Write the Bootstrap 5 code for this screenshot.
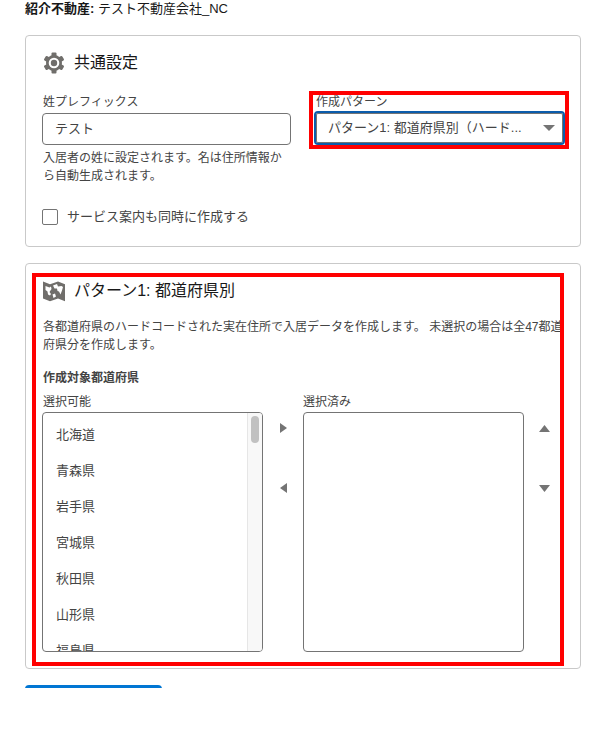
<!DOCTYPE html>
<html lang="ja">
<head>
<meta charset="utf-8">
<title>共通設定</title>
<link href="https://cdn.jsdelivr.net/npm/bootstrap@5.3.0/dist/css/bootstrap.min.css" rel="stylesheet">
<style>
html, body { height: 100%; overflow: hidden; background: #fff; }
body { font-family: "Liberation Sans", "Noto Sans CJK JP", sans-serif; font-size: 13px; color: #181818; }
.pg { height: 688px; overflow: hidden; padding: 1px 18px 0 25px; position: relative; }
.agency { line-height: 16px; margin-bottom: 18px; height: 16px; }
.panel { border: 1px solid #c9c9c9; border-radius: 4px; }
.panel-a { height: 212px; padding: 13px 17px 0; margin-bottom: 16px; }
.panel-b { height: 406px; padding: 13px 17px 0; overflow: hidden; margin-bottom: 16px; }
.head { height: 28px; font-size: 16px; gap: 8px; line-height: 28px; margin-left: -1px; }
.head svg { width: 24px; height: 24px; flex: none; }
.head-a { margin-bottom: 17px; }
.head-b { margin-bottom: 13px; }
.fld-label { font-size: 12px; line-height: 16px; color: #444; display: block; }
.two { display: grid; grid-template-columns: 248px 248px; gap: 25px; }
.txt { height: 32px; border: 1px solid #747474; border-radius: 4px; padding: 0 12px; line-height: 30px; margin: 3px 0 0 -1px; color: #444; }
.sel { height: 34px; border: 2px solid #0b5cab; border-radius: 4px; padding: 0 12px; line-height: 30px; margin: 1px -1px 0 -2px; position: relative; box-shadow: inset 0 0 0 1px #747474; color: #444; }
.sel i { position: absolute; right: 8px; top: 12px; width: 0; height: 0; border: 6px solid transparent; border-top: 6px solid #747474; border-bottom: 0; }
.hint { font-size: 12px; line-height: 18px; color: #444; margin-top: 4px; }
.chk { margin-top: 23px; gap: 9px; color: #444; line-height: 18px; }
.chk span { width: 16px; height: 16px; border: 1px solid #747474; border-radius: 2px; flex: none; margin-left: -1px; }
.desc { font-size: 12px; line-height: 18px; color: #444; width: 522px; }
.subh { font-size: 12px; font-weight: 700; line-height: 16px; color: #444; margin-top: 16px; margin-bottom: 8px; }
.dual { display: grid; grid-template-columns: 220px 40px 221px 40px; }
.lbox { height: 240px; border: 1px solid #747474; border-radius: 4px; overflow: hidden; margin-top: 2px; position: relative; }
.lbox-l { margin-left: -1px; }
.lbox ul { list-style: none; margin: 0; padding: 5px 0 0 13px; color: #444; }
.lbox li { height: 36px; line-height: 34px; }
.sbar { position: absolute; right: 0; top: 0; bottom: 0; width: 15px; background: #f8f8f8; border-left: 1px solid #e6e6e6; }
.sbar b { position: absolute; left: 3px; top: 3px; width: 8px; height: 27px; border-radius: 4px; background: #c1c1c1; }
.arrows { padding-top: 29px; display: flex; flex-direction: column; align-items: center; gap: 50px; }
.arrows-v { padding-top: 31px; gap: 53px; }
.arr { display: block; width: 11px; height: 7px; fill: #747474; }
.arrows .side { width: 7px; height: 10px; }
.cta { width: 137px; height: 20px; background: #0176d3; border-radius: 4px; }
.mark-r { position: absolute; border: 4px solid #f00; pointer-events: none; }
.mark-1 { left: 309px; top: 91px; width: 260px; height: 58px; }
.mark-2 { left: 32px; top: 273px; width: 532px; height: 393px; }
</style>
</head>
<body>
<div class="pg">
  <div class="agency"><strong>紹介不動産:</strong> テスト不動産会社_NC</div>
  <section class="panel panel-a">
    <div class="head head-a d-flex align-items-center">
      <svg viewBox="0 0 24 24" fill="#706e6b">
        <circle cx="12" cy="12" r="8"/>
        <rect x="9.500" y="1.500" width="5" height="21" rx="1"/>
        <rect x="9.500" y="1.500" width="5" height="21" rx="1" transform="rotate(60 12 12)"/>
        <rect x="9.500" y="1.500" width="5" height="21" rx="1" transform="rotate(120 12 12)"/>
        <circle cx="12" cy="12" r="5.300" fill="#fff"/>
        <circle cx="12" cy="12" r="3.200"/>
      </svg>
      <span>共通設定</span>
    </div>
    <div class="two">
      <div>
        <label class="fld-label">姓プレフィックス</label>
        <div class="txt">テスト</div>
        <div class="hint">入居者の姓に設定されます。名は住所情報から自動生成されます。</div>
      </div>
      <div>
        <label class="fld-label">作成パターン</label>
        <div class="sel"><span class="d-block text-nowrap">パターン1: 都道府県別（ハード...</span><i></i></div>
      </div>
    </div>
    <div class="chk d-flex align-items-center"><span></span>サービス案内も同時に作成する</div>
  </section>
  <section class="panel panel-b">
    <div class="head head-b d-flex align-items-center">
      <svg viewBox="0 0 24 24" fill="#706e6b">
        <path d="M1 2.500l7 2.800 8-2.800 7 2.800v17l-7-2.800-8 2.800-7-2.800z"/>
        <path fill="#fff" d="M3.500 7l4 1.500 1.500-1 .5 2.500-2 3 1.500 2-1 1.500-2-1-.5-3-2-1.500zM11 6.500l4-1.500 1 2.500 3.500-.5 1.500 1-1 3.500-1.500 4-1.500-3-1.500-.5-.5-2.500-2.500 0z"/>
        <path fill="#fff" d="M10.500 15.500l2.500-1 1 3-2.500 1.500z"/>
      </svg>
      <span>パターン1: 都道府県別</span>
    </div>
    <div class="desc">各都道府県のハードコードされた実在住所で入居データを作成します。 未選択の場合は全47都道府県分を作成します。</div>
    <div class="subh">作成対象都道府県</div>
    <div class="dual">
      <div>
        <span class="fld-label">選択可能</span>
        <div class="lbox lbox-l">
          <ul><li>北海道</li><li>青森県</li><li>岩手県</li><li>宮城県</li><li>秋田県</li><li>山形県</li><li>福島県</li></ul>
          <div class="sbar"><b></b></div>
        </div>
      </div>
      <div class="arrows">
        <svg class="arr side" viewBox="0 0 7 10"><path d="M0 0l7 5-7 5z"/></svg>
        <svg class="arr side" viewBox="0 0 7 10"><path d="M7 0L0 5l7 5z"/></svg>
      </div>
      <div>
        <span class="fld-label">選択済み</span>
        <div class="lbox"></div>
      </div>
      <div class="arrows arrows-v">
        <svg class="arr" viewBox="0 0 11 7"><path d="M0 7l5.500-7 5.500 7z"/></svg>
        <svg class="arr" viewBox="0 0 11 7"><path d="M0 0l5.500 7 5.500-7z"/></svg>
      </div>
    </div>
  </section>
  <div class="cta"></div>
  <div class="mark-r mark-1"></div>
  <div class="mark-r mark-2"></div>
</div>
<script src="https://cdn.jsdelivr.net/npm/bootstrap@5.3.0/dist/js/bootstrap.bundle.min.js"></script>
</body>
</html>
